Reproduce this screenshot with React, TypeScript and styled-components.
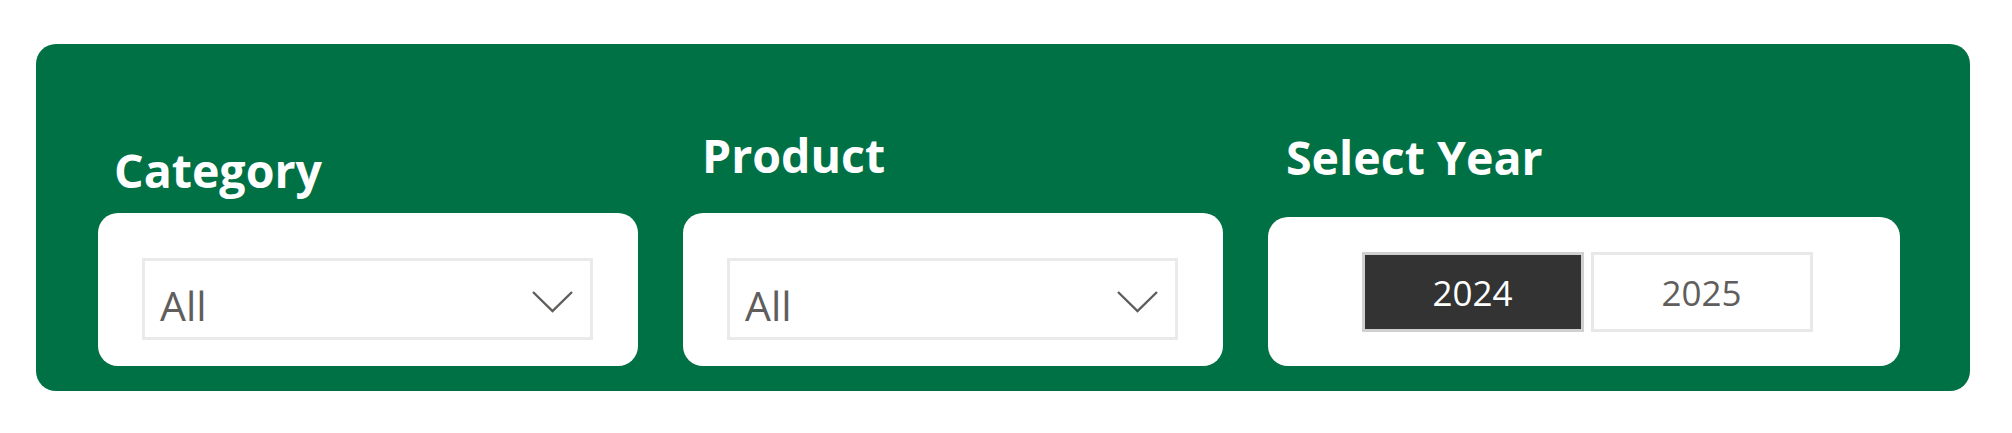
import React from "react";
import styled, { createGlobalStyle } from "styled-components";

const GlobalStyle = createGlobalStyle`
  html, body {
    margin: 0;
    padding: 0;
    background: #ffffff;
  }
  body {
    font-family: "Open Sans", "Noto Sans", "Liberation Sans", sans-serif;
  }
`;

const Panel = styled.div`
  box-sizing: border-box;
  margin: 44px 0 0 36px;
  width: 1934px;
  height: 347px;
  background: #007144;
  border-radius: 20px;
  padding: 0 69px 25px 62px;
  display: flex;
  align-items: flex-end;
  gap: 45px;
`;

const Column = styled.div<{ $width: number }>`
  width: ${(p) => p.$width}px;
  display: flex;
  flex-direction: column;
  flex-shrink: 0;
`;

const Title = styled.h2<{ $indent: number; $gap: number }>`
  margin: 0 0 ${(p) => p.$gap}px ${(p) => p.$indent}px;
  font-family: "Open Sans", "Noto Sans", sans-serif;
  font-weight: 700;
  font-size: 46.5px;
  line-height: 56px;
  color: #ffffff;
  white-space: nowrap;
`;

const Card = styled.div<{ $height: number; $center?: boolean }>`
  box-sizing: border-box;
  height: ${(p) => p.$height}px;
  background: #ffffff;
  border-radius: 20px;
  display: flex;
  align-items: ${(p) => (p.$center ? "center" : "flex-start")};
  justify-content: ${(p) => (p.$center ? "center" : "flex-start")};
  padding: ${(p) => (p.$center ? "0 0 0 6px" : "45px 45px 0 44px")};
`;

const DropBox = styled.div`
  box-sizing: border-box;
  width: 100%;
  height: 82px;
  border: 3px solid #eaeaea;
  display: flex;
  align-items: center;
  justify-content: space-between;
  padding: 0 17px 0 15px;
`;

const Value = styled.span`
  margin-top: 12px;
  font-family: "Open Sans", "Noto Sans", sans-serif;
  font-weight: 400;
  font-size: 41px;
  color: #605e5c;
`;

const Chevron = styled.svg`
  margin-top: 6px;
  width: 41px;
  height: 22px;
  display: block;
`;

const YearRow = styled.div`
  display: flex;
  gap: 7px;
  margin-top: 1px;
`;

const YearButton = styled.button<{ $active?: boolean }>`
  box-sizing: border-box;
  width: 222px;
  height: 80px;
  margin: 0;
  border: 3px solid ${(p) => (p.$active ? "#d0d0d0" : "#e8e8e8")};
  background: ${(p) => (p.$active ? "#333333" : "#ffffff")};
  color: ${(p) => (p.$active ? "#ffffff" : "#605e5c")};
  font-family: "Open Sans", "Noto Sans", sans-serif;
  font-weight: 400;
  font-size: 35px;
  display: flex;
  align-items: center;
  justify-content: center;
  padding: 0;
  cursor: pointer;
`;

const ChevronIcon = () => (
  <Chevron viewBox="0 0 41 22" fill="none">
    <polyline
      points="1,1 20.5,20 40,1"
      stroke="#605e5c"
      strokeWidth="2.4"
      fill="none"
    />
  </Chevron>
);

const Dropdown = ({ value }: { value: string }) => (
  <Card $height={153}>
    <DropBox>
      <Value>{value}</Value>
      <ChevronIcon />
    </DropBox>
  </Card>
);

export default function App() {
  return (
    <>
      <GlobalStyle />
      <Panel>
        <Column $width={540}>
          <Title $indent={16} $gap={15}>Category</Title>
          <Dropdown value="All" />
        </Column>
        <Column $width={540}>
          <Title $indent={19} $gap={30}>Product</Title>
          <Dropdown value="All" />
        </Column>
        <Column $width={632}>
          <Title $indent={18} $gap={32}>Select Year</Title>
          <Card $height={149} $center>
            <YearRow>
              <YearButton $active>2024</YearButton>
              <YearButton>2025</YearButton>
            </YearRow>
          </Card>
        </Column>
      </Panel>
    </>
  );
}
